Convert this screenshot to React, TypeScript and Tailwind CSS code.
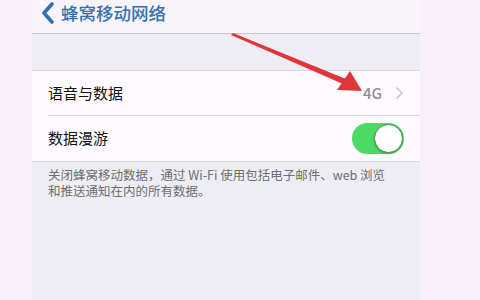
const cn = { fontFamily: '"Noto Sans CJK SC", "Noto Sans", sans-serif' };

const Toggle = ({ on }: { on: boolean }) => (
  <div
    className={`relative h-[31px] w-[52px] rounded-full ${
      on ? "bg-[#4cd964]" : "bg-[#e5e5ea]"
    }`}
  >
    <div className="absolute right-[1px] top-[1px] h-[29px] w-[29px] rounded-full border border-[#3f8f52] bg-white shadow-[0_1px_2px_rgba(0,0,0,0.25)]" />
  </div>
);

const Row = ({
  label,
  children,
  divider,
}: {
  label: string;
  children?: React.ReactNode;
  divider?: boolean;
}) => (
  <div className="pl-4">
    <div
      className={`flex h-[45px] items-center justify-between pr-4 ${
        divider ? "border-b border-[#d9d7dd]" : ""
      }`}
    >
      <span className="text-[15px] text-[#111]">{label}</span>
      {children}
    </div>
  </div>
);

export default function App() {
  return (
    <div className="relative flex h-[300px] w-[480px] bg-[#f7f0f8]" style={cn}>
      <div className="ml-8 flex w-[388px] flex-col bg-[#efedf4]">
        {/* nav bar */}
        <div className="flex h-[34px] items-start border-b border-[#c9c5cd] bg-[#f8f4f9] pl-2 pt-[2px]">
          <svg width="16" height="22" viewBox="0 0 16 22">
            <path
              d="M12 2 L4 11 L12 20"
              fill="none"
              stroke="#3470b4"
              strokeWidth="3.6"
              strokeLinecap="round"
              strokeLinejoin="round"
            />
          </svg>
          <span className="ml-[5px] mt-[1px] text-[17.5px] font-medium leading-[19px] text-[#3470b4]">
            蜂窝移动网络
          </span>
        </div>

        <div className="h-[36px]" />

        {/* settings group */}
        <div className="border-y border-[#d6d3da] bg-[#fdfbfe]">
          <Row label="语音与数据" divider>
            <div className="flex items-center gap-[13px]">
              <span className="text-[15px] font-medium text-[#8e8e93]">4G</span>
              <svg width="9" height="14" viewBox="0 0 9 14">
                <path
                  d="M1.5 1.5 L7 7 L1.5 12.5"
                  fill="none"
                  stroke="#c7c7cc"
                  strokeWidth="1.6"
                />
              </svg>
            </div>
          </Row>
          <Row label="数据漫游">
            <Toggle on />
          </Row>
        </div>

        <p className="pl-4 pr-6 pt-[5px] text-[12.5px] leading-[16px] text-[#6d6d72]">
          关闭蜂窝移动数据，通过 Wi-Fi 使用包括电子邮件、web 浏览和推送通知在内的所有数据。
        </p>
      </div>

      {/* annotation arrow */}
      <svg
        className="pointer-events-none absolute left-0 top-0"
        width="480"
        height="300"
      >
        <path d="M233 33 L346 79 L343 84 L231 35 Z" fill="#e0363b" />
        <path d="M362 91 L337 90 L350 71 Z" fill="#e0363b" />
      </svg>
    </div>
  );
}
